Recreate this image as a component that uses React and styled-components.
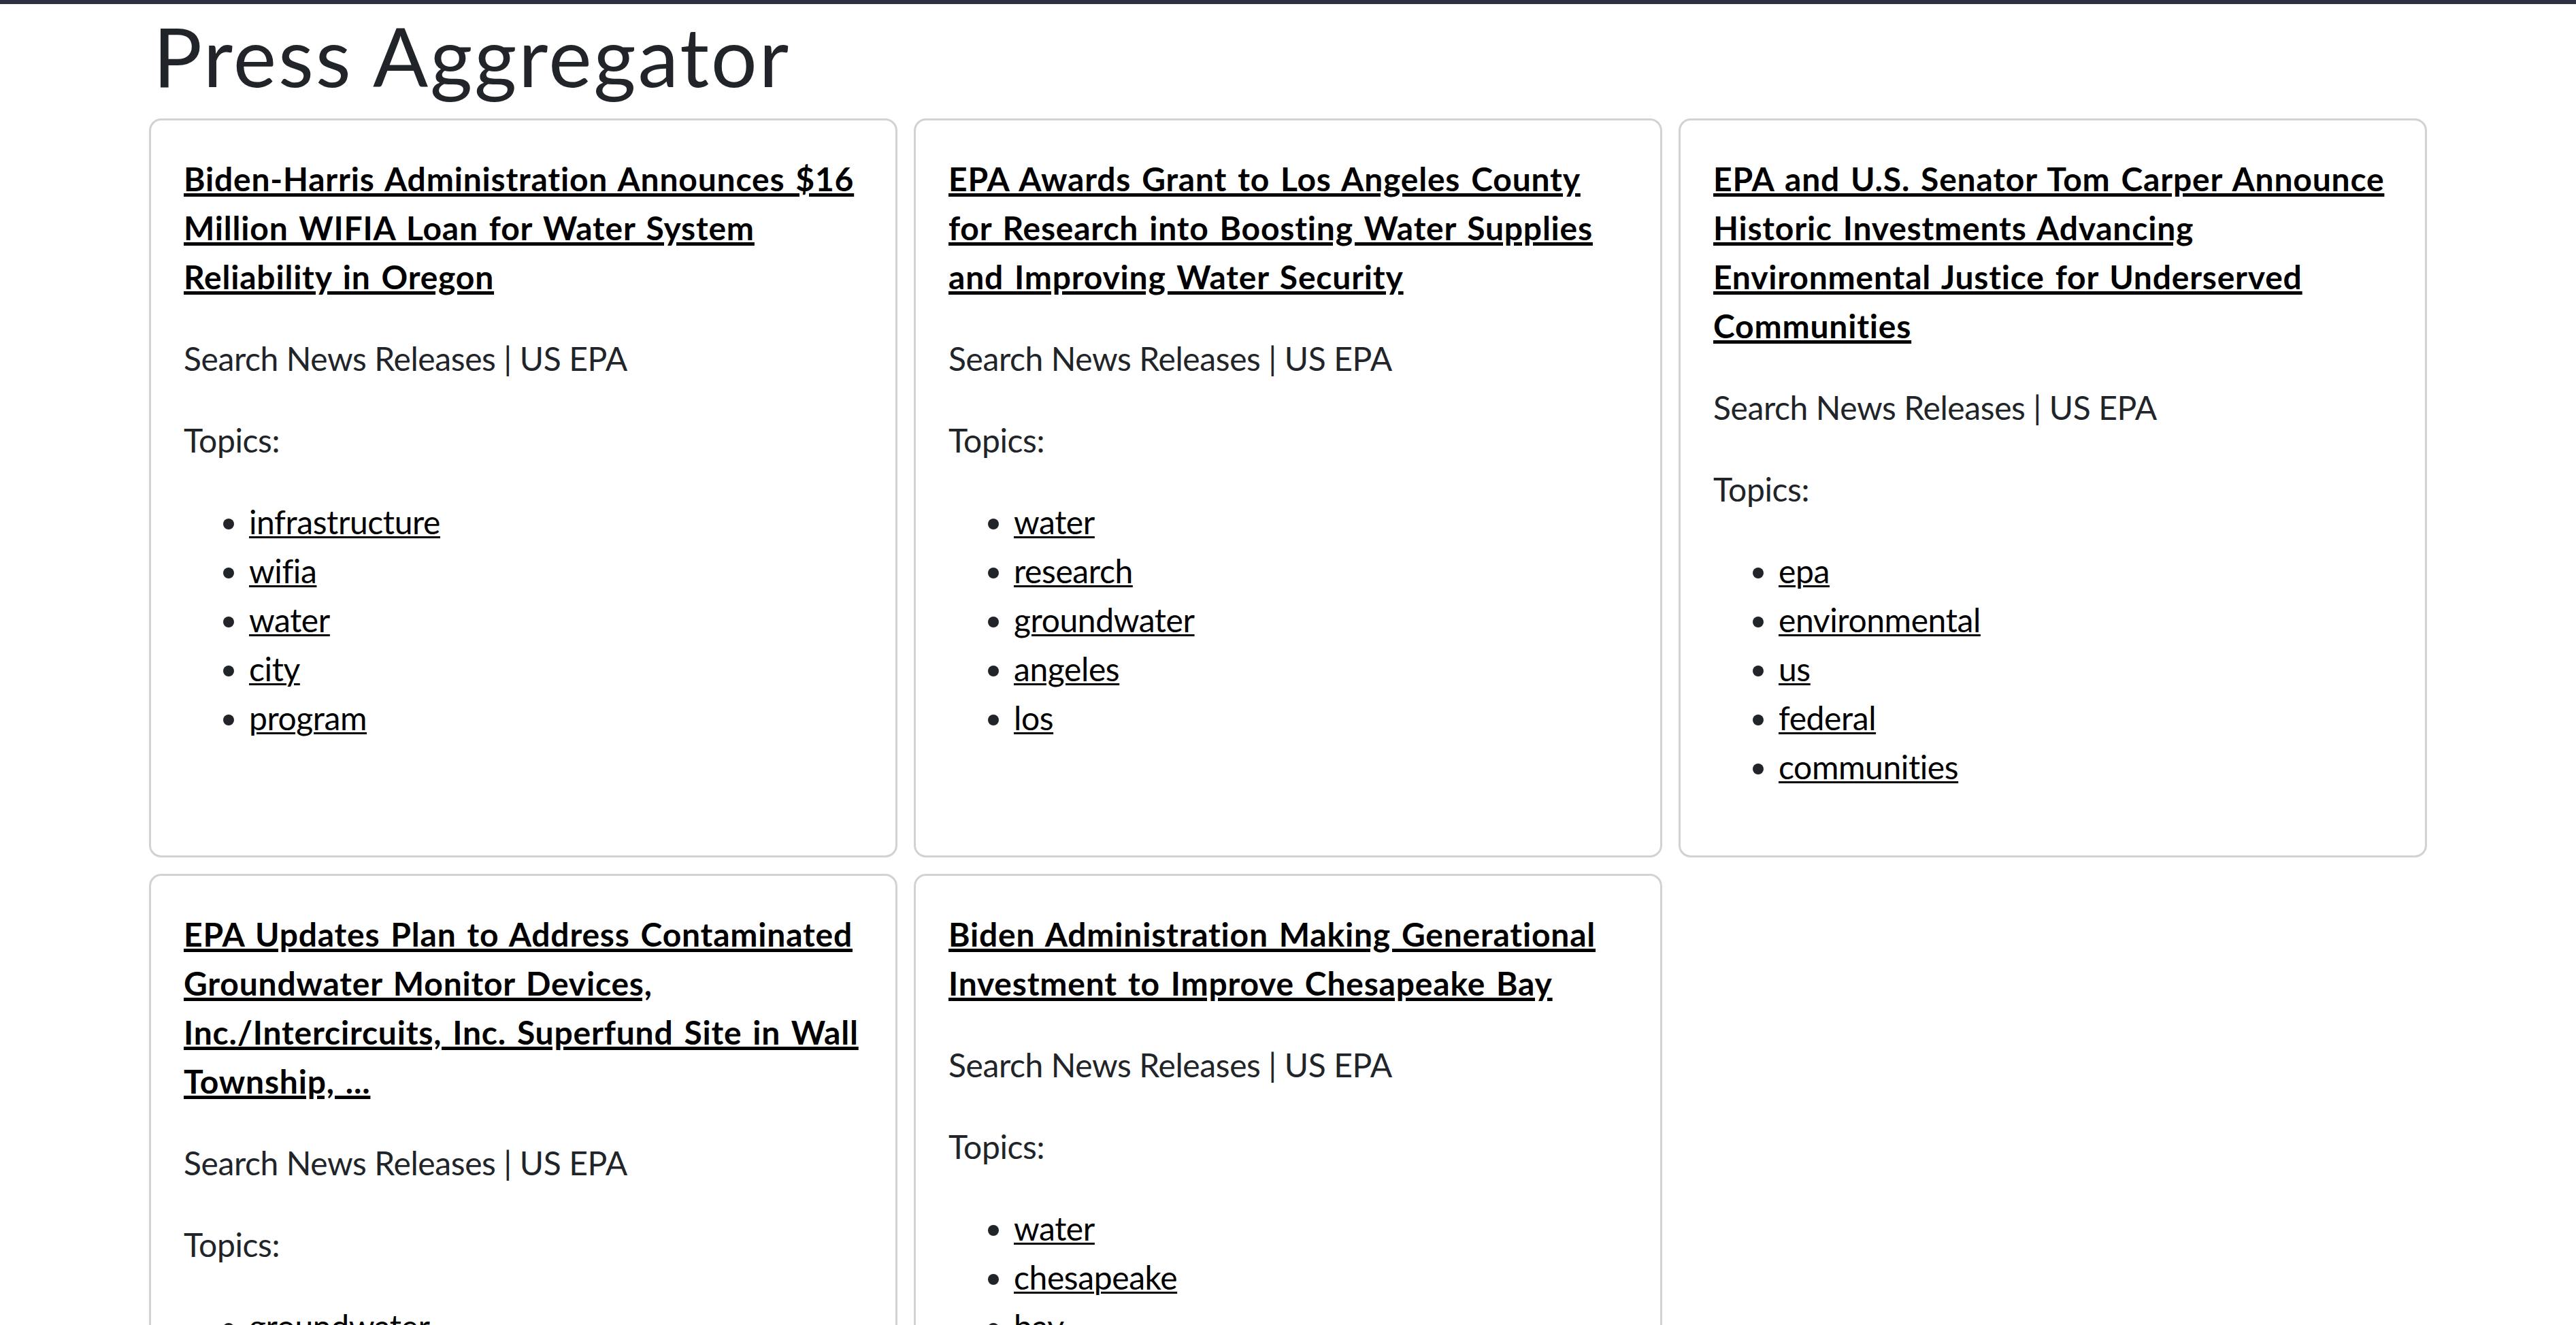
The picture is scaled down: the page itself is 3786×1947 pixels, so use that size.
import React from "react";
import styled, { createGlobalStyle } from "styled-components";

const GlobalStyle = createGlobalStyle`
  *, *::before, *::after { box-sizing: border-box; }
  html, body { margin: 0; padding: 0; background: #ffffff; }
  body {
    font-family: "Lato", "Liberation Sans", sans-serif;
    font-size: 48px;
    line-height: 72px;
    color: #212529;
    letter-spacing: -0.4px;
  }
`;

const TopBar = styled.div`
  height: 6px;
  background: #2e3140;
`;

const Container = styled.main`
  max-width: 3420px;
  margin: 0 auto;
  padding: 0 36px;
`;

const PageTitle = styled.h1`
  margin: 0 0 24px;
  padding: 8px 0 0 6px;
  font-size: 120px;
  line-height: 136px;
  font-weight: 400;
  letter-spacing: 2.8px;
  color: #212529;
`;

const CardGrid = styled.div`
  display: grid;
  grid-template-columns: repeat(3, minmax(0, 1fr));
  gap: 24px;
`;

const Card = styled.article`
  background: #ffffff;
  border: 3px solid rgba(0, 0, 0, 0.175);
  border-radius: 18px;
  padding: 48px;
`;

const CardTitle = styled.h2`
  margin: 0 0 48px;
  padding-top: 2px;
  font-size: 48px;
  line-height: 72px;
  font-weight: 700;
  letter-spacing: 0.8px;
  word-spacing: 3.5px;
`;

const TitleLink = styled.a`
  color: #000000;
  text-decoration: underline;
  text-decoration-thickness: 5px;
  text-underline-offset: 3px;
`;

const Text = styled.p`
  margin: 0 0 48px;
`;

const TopicList = styled.ul`
  margin: 0 0 46px;
  padding-left: 96px;
  list-style: disc;
`;

const TopicLink = styled.a`
  color: #000000;
  text-decoration: underline;
  text-decoration-thickness: 3px;
  text-underline-offset: 3px;
`;

const articles = [
  {
    title:
      "Biden-Harris Administration Announces $16 Million WIFIA Loan for Water System Reliability in Oregon",
    source: "Search News Releases | US EPA",
    topics: ["infrastructure", "wifia", "water", "city", "program"],
  },
  {
    title:
      "EPA Awards Grant to Los Angeles County for Research into Boosting Water Supplies and Improving Water Security",
    source: "Search News Releases | US EPA",
    topics: ["water", "research", "groundwater", "angeles", "los"],
  },
  {
    title:
      "EPA and U.S. Senator Tom Carper Announce Historic Investments Advancing Environmental Justice for Underserved Communities",
    source: "Search News Releases | US EPA",
    topics: ["epa", "environmental", "us", "federal", "communities"],
  },
  {
    title:
      "EPA Updates Plan to Address Contaminated Groundwater Monitor Devices, Inc./Intercircuits, Inc. Superfund Site in Wall Township, ...",
    source: "Search News Releases | US EPA",
    topics: ["groundwater", "superfund", "site", "cleanup", "epa"],
  },
  {
    title:
      "Biden Administration Making Generational Investment to Improve Chesapeake Bay",
    source: "Search News Releases | US EPA",
    topics: ["water", "chesapeake", "bay", "restoration", "funding"],
  },
];

function ArticleCard({ article }) {
  return (
    <Card>
      <CardTitle>
        <TitleLink href="#">{article.title}</TitleLink>
      </CardTitle>
      <Text>{article.source}</Text>
      <Text>Topics:</Text>
      <TopicList>
        {article.topics.map((t) => (
          <li key={t}>
            <TopicLink href="#">{t}</TopicLink>
          </li>
        ))}
      </TopicList>
    </Card>
  );
}

export default function App() {
  return (
    <>
      <GlobalStyle />
      <TopBar />
      <Container>
        <PageTitle>Press Aggregator</PageTitle>
        <CardGrid>
          {articles.map((a) => (
            <ArticleCard key={a.title} article={a} />
          ))}
        </CardGrid>
      </Container>
    </>
  );
}
